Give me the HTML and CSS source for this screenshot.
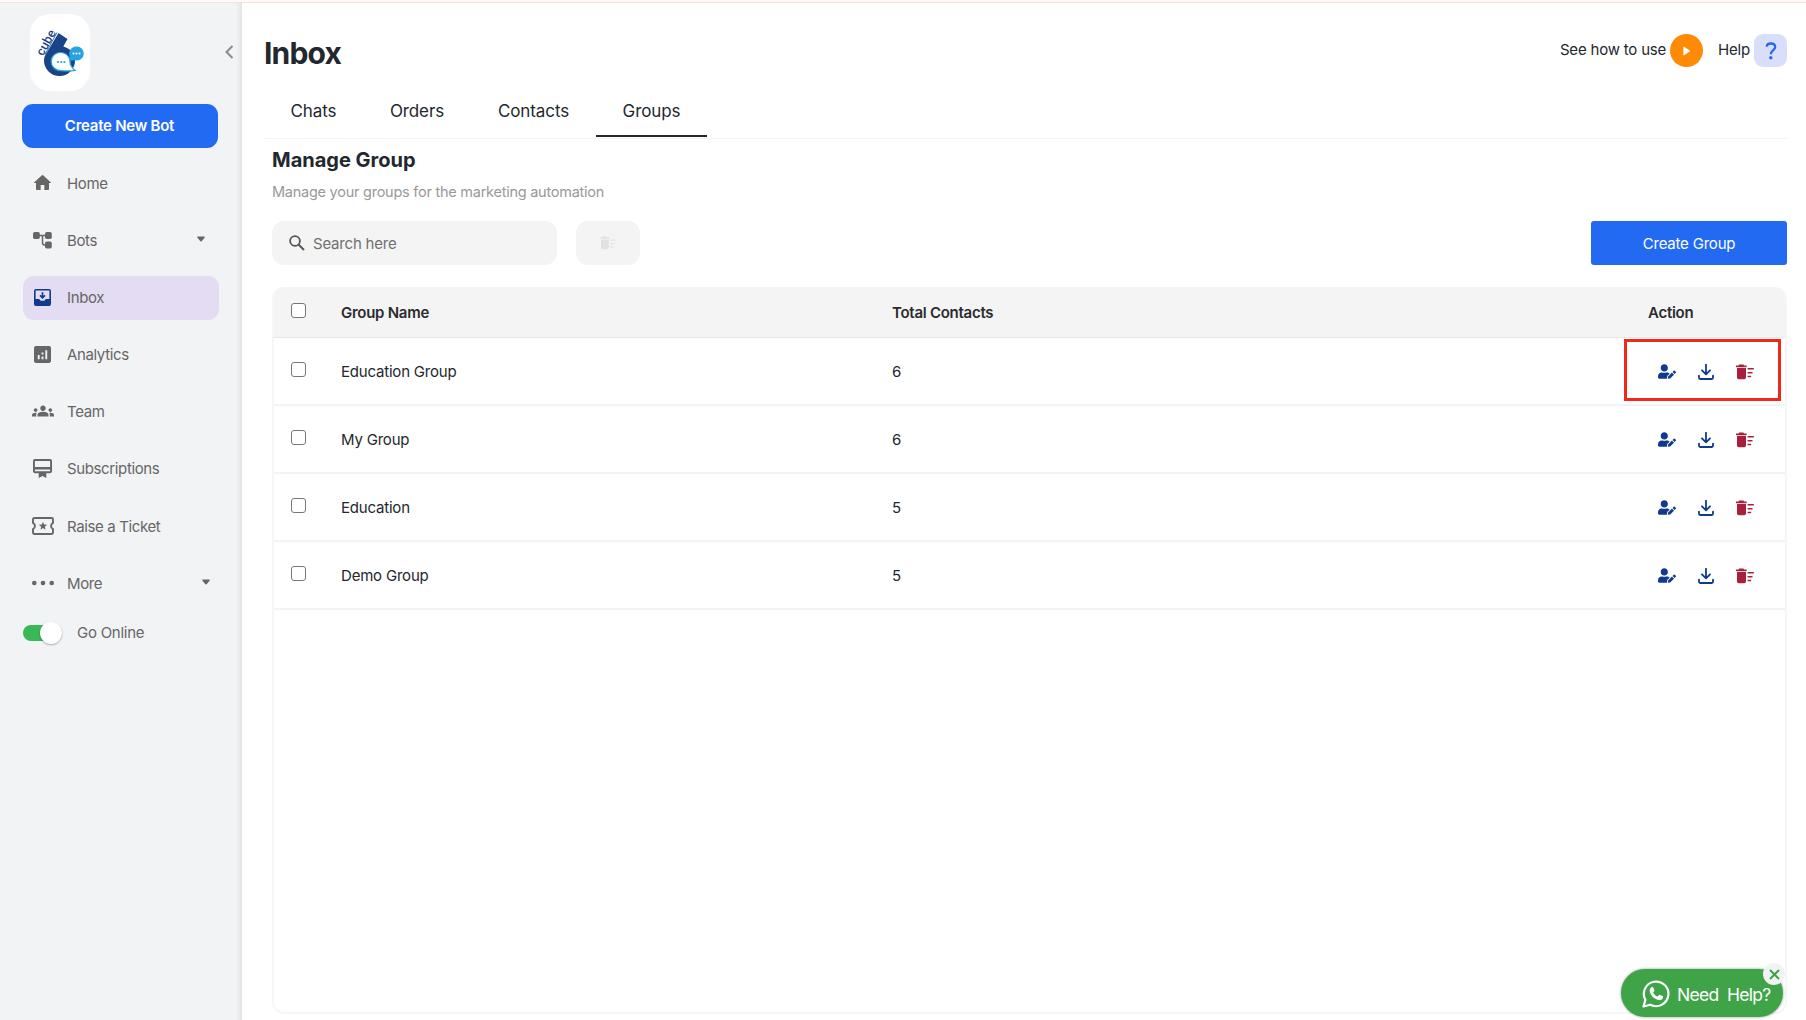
FILE: index.html
```
<!DOCTYPE html>
<html lang="en">

<head>
    <meta charset="utf-8">
    <title>Inbox - Groups</title>
    <link rel="stylesheet" href="styles.css">
</head>

<body>
    <!-- icons used more than once -->
    <svg class="sprite">
        <symbol id="user-edit" viewBox="0 0 640 512">
            <path d="M224 256c70.7 0 128-57.3 128-128S294.7 0 224 0 96 57.3 96 128s57.3 128 128 128zm89.6 32h-16.7c-22.2 10.2-46.9 16-72.9 16s-50.6-5.8-72.9-16h-16.7C60.2 288 0 348.2 0 422.4V464c0 26.5 21.5 48 48 48h274.9c-2.4-6.8-3.4-14-2.6-21.3l6.8-60.9 1.2-11.1 7.9-7.9 77.3-77.3c-24.5-27.7-60-45.5-99.9-45.5zm45.3 145.3l-6.8 61c-1.1 10.2 7.5 18.8 17.6 17.6l60.9-6.8 137.9-137.9-71.7-71.7-137.9 137.8zM633 268.9L595.1 231c-9.3-9.3-24.5-9.3-33.8 0l-37.8 37.8-4.1 4.1 71.8 71.7 41.8-41.8c9.3-9.4 9.3-24.5 0-33.9z" />
        </symbol>
        <symbol id="download" viewBox="0 0 16 16">
            <path d="M8 .8v9M4 6.3l4 4 4-4M1 11.6v2.2q0 1.2 1.2 1.2h11.6q1.2 0 1.2-1.2v-2.2" fill="none" stroke="currentColor" stroke-width="1.8" stroke-linecap="round" stroke-linejoin="round" />
        </symbol>
        <symbol id="trash" viewBox="0 0 18 16">
            <path d="M3.2.4h4.2l.7 1.1h2.6v1.7H0V1.5h2.5zM1 4h9v9.400q0 1.800-1.800 1.800H2.800Q1 15.200 1 13.400zM11.600 4h6.200v1.500h-6.200zM11.600 7.900h4.900v1.500h-4.900zM11.600 11.800h3.500v1.500h-3.500z" />
        </symbol>
        <symbol id="caret" viewBox="0 0 8 6">
            <path d="M.4.4h7.200v1.400L4.600 5.200q-.6.600-1.200 0L.4 1.800z" />
        </symbol>
    </svg>

    <div class="topline"></div>
    <div class="layout">
        <aside class="sidebar">
            <div class="brand">
                <div class="logo">
                    <svg width="60" height="77" viewBox="0 0 60 77">
                        <path d="M28.500 19L37.500 25l-4.200 7.500C41 35 45 40 45 46.500A15.500 15.500 0 0 1 14 46.500C14 43.500 15 41.500 16.500 39z" fill="#1b4487" />
                        <path d="M27 18.500L15 40.500" stroke="#1b4487" stroke-width=".8" />
                        <path d="M46 32.500a7 7 0 1 1-1 13.700q-3.500.8-8.500.3 3-2 3.200-4.300A7 7 0 0 1 46 32.500z" fill="#27a4df" />
                        <path d="M30.500 38.500c5.500 0 9.500 4 9.500 9 0 3.500 2 6.500 5 8.800-4 .8-9 .7-14 .4-5.500 0-9.800-4-9.800-9.200 0-5 4-9 9.300-9z" fill="#fff" stroke="#27a4df" stroke-width="1.200" />
                        <g fill="#27a4df"><circle cx="28" cy="48" r="1.100" /><circle cx="31.200" cy="48" r="1.100" /><circle cx="34.400" cy="48" r="1.100" /></g>
                        <g fill="#fff"><circle cx="43.500" cy="39.500" r="1" /><circle cx="46.500" cy="39.500" r="1" /><circle cx="49.500" cy="39.500" r="1" /></g>
                        <text class="logo-text" transform="translate(13 42.500) rotate(-61)">cube</text>
                    </svg>
                </div>
                <svg class="collapse" width="9" height="14" viewBox="0 0 9 14"><path d="M7.500 1L1.500 7l6 6" fill="none" stroke="#8a8a8a" stroke-width="2" /></svg>
            </div>
            <button class="new-bot">Create New Bot</button>
            <nav class="menu">
                <a class="item">
                    <span class="icon"><svg width="21" height="20" viewBox="0 0 24 24"><path d="M9.800 20.500v-6h4.400v6h4.600q1 0 1-1V12h2.100q.6-.2.200-.7L12.700 2.800q-.7-.6-1.400 0L1.900 11.300q-.4.500.2.700h2.100v7.500q0 1 1 1z" /></svg></span>
                    <span>Home</span>
                </a>
                <a class="item">
                    <span class="icon"><svg width="19" height="17" viewBox="0 0 19 17"><rect x="0" y="0" width="6.800" height="7" rx="1.800" /><rect x="12" y="0" width="6.800" height="7" rx="1.800" /><rect x="12" y="9.600" width="6.800" height="7" rx="1.800" /><path d="M6 3.500h7M9.500 3.500v7q0 2.600 2.500 2.600h1" fill="none" stroke="#666" stroke-width="1.500" /></svg></span>
                    <span>Bots</span>
                    <svg class="caret" width="8" height="6"><use href="#caret" /></svg>
                </a>
                <a class="item active">
                    <span class="icon"><svg width="17" height="17" viewBox="0 0 18 18"><path fill-rule="evenodd" d="M2 0h14q2 0 2 2v14q0 2-2 2H2q-2 0-2-2V2q0-2 2-2zM1.700 1.700V10.500H5.500L7 12.500h4L12.500 10.500H16.300V1.700z" /><path d="M9 3.500v5M6.400 6.700L9 9.300l2.600-2.600" fill="none" stroke="#0f3a8d" stroke-width="1.700" /></svg></span>
                    <span>Inbox</span>
                </a>
                <a class="item">
                    <span class="icon"><svg width="17" height="17" viewBox="3 3 18 18"><path d="M19 3H5c-1.100 0-2 .9-2 2v14c0 1.100.9 2 2 2h14c1.100 0 2-.9 2-2V5c0-1.100-.9-2-2-2zM9 17H7v-4.500h2V17zm4 0h-2v-3h2v3zm0-5h-2v-2h2v2zm4 5h-2V7.500h2V17z" /></svg></span>
                    <span>Analytics</span>
                </a>
                <a class="item">
                    <span class="icon"><svg width="22" height="22" viewBox="0 0 24 24"><path d="M12 12.750c1.630 0 3.070.39 4.240.9 1.080.48 1.760 1.560 1.760 2.730V18H6v-1.610c0-1.180.68-2.260 1.760-2.730 1.170-.52 2.610-.91 4.240-.91zM4 13c1.100 0 2-.9 2-2s-.9-2-2-2-2 .9-2 2 .9 2 2 2zm1.130 1.100c-.37-.06-.74-.1-1.130-.1-.99 0-1.930.21-2.780.58A2.010 2.010 0 0 0 0 16.430V18h4.500v-1.610c0-.83.23-1.610.63-2.290zM20 13c1.100 0 2-.9 2-2s-.9-2-2-2-2 .9-2 2 .9 2 2 2zm4 3.430c0-.81-.48-1.530-1.220-1.850A6.950 6.950 0 0 0 20 14c-.39 0-.76.04-1.130.1.4.68.63 1.460.63 2.290V18H24v-1.570zM12 6c1.660 0 3 1.340 3 3s-1.340 3-3 3-3-1.340-3-3 1.340-3 3-3z" /></svg></span>
                    <span>Team</span>
                </a>
                <a class="item">
                    <span class="icon"><svg width="19" height="19" viewBox="2 2 20 20"><path d="M20 2H4c-1.110 0-2 .89-2 2v11c0 1.110.89 2 2 2h4v5l4-2 4 2v-5h4c1.110 0 2-.89 2-2V4c0-1.110-.89-2-2-2zm0 13H4v-2h16v2zm0-4.500H4V4h16v6.500z" /></svg></span>
                    <span>Subscriptions</span>
                </a>
                <a class="item">
                    <span class="icon"><svg width="22" height="18" viewBox="0 0 22 18"><path d="M2.500 1h17q1.500 0 1.500 1.500v3.300a3.600 3.600 0 0 0 0 6.400v3.300q0 1.500-1.500 1.500h-17Q1 17 1 15.500v-3.300a3.600 3.600 0 0 0 0-6.400V2.500Q1 1 2.500 1z" fill="none" stroke="#666" stroke-width="1.900" /><path d="M11 4.800l1.150 2.750 3 .25-2.300 1.950.7 2.900L11 11.100l-2.550 1.550.7-2.900-2.300-1.950 3-.25z" /></svg></span>
                    <span>Raise a Ticket</span>
                </a>
                <a class="item more">
                    <span class="icon"><svg width="22" height="6" viewBox="0 0 22 6"><circle cx="2.300" cy="3" r="2.300" /><circle cx="11" cy="3" r="2.300" /><circle cx="19.700" cy="3" r="2.300" /></svg></span>
                    <span>More</span>
                    <svg class="caret" width="8" height="6"><use href="#caret" /></svg>
                </a>
            </nav>
            <div class="online">
                <span class="switch"><span class="knob"></span></span>
                <span>Go Online</span>
            </div>
        </aside>

        <main class="main">
            <header class="header">
                <h1>Inbox</h1>
                <div class="links">
                    <span class="how">See how to use</span>
                    <span class="play"><svg width="8" height="10" viewBox="0 0 8 10"><path d="M.8 1v8l6-4z" fill="#fff" stroke="#fff" stroke-width=".8" stroke-linejoin="round" /></svg></span>
                    <span class="help">Help</span>
                    <span class="question"><svg width="12" height="18" viewBox="0 0 12 18"><path d="M1.600 4.700C1.800 2.600 3.500 1.500 5.800 1.500c2.500 0 4.400 1.400 4.400 3.600 0 3.100-4.300 3.200-4.300 7.100" fill="none" stroke="#2668ee" stroke-width="2.300" /><circle cx="5.800" cy="15.800" r="1.700" fill="#2668ee" /></svg></span>
                </div>
            </header>
            <div class="tabs">
                <a class="tab chats">Chats</a>
                <a class="tab orders">Orders</a>
                <a class="tab contacts">Contacts</a>
                <a class="tab groups selected">Groups</a>
            </div>

            <section class="content">
                <h2>Manage Group</h2>
                <p class="sub">Manage your groups for the marketing automation</p>
                <div class="tools">
                    <div class="search">
                        <svg width="16" height="16" viewBox="0 0 16 16"><circle cx="6" cy="6" r="4.900" fill="none" stroke="#555" stroke-width="1.800" /><path d="M9.500 9.500l5.500 5.500" stroke="#555" stroke-width="2" /></svg>
                        <span>Search here</span>
                    </div>
                    <button class="bulk-delete"><svg width="16" height="14"><use href="#trash" /></svg></button>
                    <button class="create-group">Create Group</button>
                </div>

                <div class="table">
                    <div class="row head">
                        <span class="check"></span>
                        <span>Group Name</span>
                        <span class="total">Total Contacts</span>
                        <span class="action">Action</span>
                    </div>
                    <div class="row">
                        <span class="check"></span>
                        <span>Education Group</span>
                        <span>6</span>
                        <span class="actions">
                            <svg class="edit" width="18" height="15"><use href="#user-edit" /></svg>
                            <svg class="save" width="16" height="16"><use href="#download" /></svg>
                            <svg class="delete" width="18" height="16"><use href="#trash" /></svg>
                        </span>
                        <span class="highlight"></span>
                    </div>
                    <div class="row">
                        <span class="check"></span>
                        <span>My Group</span>
                        <span>6</span>
                        <span class="actions">
                            <svg class="edit" width="18" height="15"><use href="#user-edit" /></svg>
                            <svg class="save" width="16" height="16"><use href="#download" /></svg>
                            <svg class="delete" width="18" height="16"><use href="#trash" /></svg>
                        </span>
                    </div>
                    <div class="row">
                        <span class="check"></span>
                        <span>Education</span>
                        <span>5</span>
                        <span class="actions">
                            <svg class="edit" width="18" height="15"><use href="#user-edit" /></svg>
                            <svg class="save" width="16" height="16"><use href="#download" /></svg>
                            <svg class="delete" width="18" height="16"><use href="#trash" /></svg>
                        </span>
                    </div>
                    <div class="row">
                        <span class="check"></span>
                        <span>Demo Group</span>
                        <span>5</span>
                        <span class="actions">
                            <svg class="edit" width="18" height="15"><use href="#user-edit" /></svg>
                            <svg class="save" width="16" height="16"><use href="#download" /></svg>
                            <svg class="delete" width="18" height="16"><use href="#trash" /></svg>
                        </span>
                    </div>
                </div>
            </section>
        </main>
    </div>

    <div class="need-help">
        <svg width="28" height="28" viewBox="0 0 28 28"><path d="M1.500 26.500l1.900-6.600A12.300 12.300 0 1 1 8.300 24.700z" fill="none" stroke="#fff" stroke-width="2.200" stroke-linejoin="round" /><path d="M9.400 7.300c.6-.5 1.500-.4 1.800.3l1.100 2.500c.2.500.1.900-.3 1.300l-.9 1c1 2 2.400 3.300 4.500 4.200l1.200-1.400c.4-.4.800-.5 1.300-.3l2.400 1.200c.6.300.7.800.5 1.400-.6 2-2.300 3-4.300 2.600-4.700-1-8-4.300-8.900-8.500-.3-1.700.2-3.200 1.600-4.300z" fill="#fff" /></svg>
        <span>Need&nbsp; Help?</span>
        <div class="close"><svg width="11" height="11" viewBox="0 0 11 11"><path d="M1 1l9 9M10 1l-9 9" stroke="#3fa447" stroke-width="2" /></svg></div>
    </div>
</body>

</html>
```
FILE: styles.css
```
* {
    box-sizing: border-box;
}

body {
    margin: 0;
    height: 1020px;
    overflow: hidden;
    position: relative;
    background-color: #fff;
    color: #23272e;
    font-family: Inter, "Liberation Sans", sans-serif;
    font-size: 15px;
    letter-spacing: -0.2px;
}

h1, h2, p {
    margin: 0;
}

svg {
    display: block;
    fill: currentColor;
    flex-shrink: 0;
}

button {
    border: none;
    padding: 0;
    font-family: inherit;
    letter-spacing: inherit;
}

.sprite {
    display: none;
}

.topline {
    height: 3px;
    background-color: #fffafa;
    border-bottom: 1px solid #fbe0d9;
}

.layout {
    display: flex;
    height: 1017px;
}

/* sidebar */
.sidebar {
    width: 242px;
    flex-shrink: 0;
    background-color: #f2f3f5;
    background-image: linear-gradient(to left, #e3e4e6, #f2f3f5 6px);
    color: #666;
    letter-spacing: -0.37px;
}

.brand {
    display: flex;
    justify-content: space-between;
    padding: 11px 8px 0 30px;
}

.logo {
    width: 60px;
    height: 77px;
    border-radius: 20px;
    background-color: #fff;
}

.logo-text {
    font-family: Roboto, sans-serif;
    font-size: 12.5px;
    font-weight: 500;
    letter-spacing: 0;
    text-rendering: geometricPrecision;
    fill: #1b4487;
}

.collapse {
    margin-top: 31px;
}

.new-bot {
    display: block;
    width: 196px;
    height: 44px;
    margin: 13px 0 0 21.5px;
    border-radius: 11px;
    background-color: #226af2;
    color: #fff;
    font-size: 15px;
    font-weight: 600;
    letter-spacing: -0.25px;
    padding-bottom: 1px;
}

.menu {
    display: flex;
    flex-direction: column;
    gap: 13.1px;
    padding: 13.5px 23px 0;
}

.item {
    display: flex;
    align-items: center;
    height: 44px;
    border-radius: 11px;
    padding-right: 14px;
}

.icon {
    width: 39px;
    height: 20px;
    margin: -1px 5px 0 0;
    display: flex;
    align-items: center;
    justify-content: center;
}

.active {
    background-color: #e3dcf3;
}

.active .icon {
    color: #0f3a8d;
}

.caret {
    margin: -3px 0 0 auto;
}

.more {
    padding-right: 9px;
}

.online {
    display: flex;
    align-items: center;
    gap: 15px;
    height: 22px;
    margin: 16px 0 0 23px;
    letter-spacing: -0.25px;
}

.switch {
    width: 39px;
    height: 16px;
    margin-top: 2px;
    border-radius: 8px;
    display: flex;
    align-items: center;
    justify-content: flex-end;
    background-color: #38b857;
}

.knob {
    width: 22px;
    height: 22px;
    flex-shrink: 0;
    border-radius: 50%;
    background-color: #fff;
    box-shadow: 0 1px 2px rgba(0, 0, 0, 0.3);
}

/* main part */
.main {
    flex: 1;
    padding: 0 19px 0 22px;
}

.header {
    display: flex;
    justify-content: space-between;
    height: 83px;
    padding-top: 31px;
}

h1 {
    font-size: 30px;
    line-height: 38px;
    letter-spacing: -0.8px;
}

.links {
    display: flex;
    height: 33px;
    line-height: 31px;
}

.play, .question {
    width: 33px;
    height: 33px;
    display: flex;
    align-items: center;
    justify-content: center;
    background-color: #ff8a05;
    border-radius: 50%;
}

.play {
    margin: 0 15px 0 4px;
}

.question {
    margin-left: 4px;
    border-radius: 9px;
    background-color: #d9dffb;
}

.tabs {
    display: flex;
    height: 53px;
    border-bottom: 1px solid #f3f3f3;
    font-size: 17px;
    letter-spacing: -0.1px;
}

.tab {
    height: 51px;
    line-height: 50px;
    text-align: center;
}

.chats {
    width: 99px;
}

.orders {
    width: 108px;
}

.contacts {
    width: 125px;
}

.groups {
    width: 111px;
}

.selected {
    border-bottom: 2px solid #23272e;
}

.content {
    padding-left: 8px;
}

h2 {
    margin-top: 7px;
    font-size: 20px;
    line-height: 28px;
    letter-spacing: 0;
}

.sub {
    margin-top: 8px;
    line-height: 20px;
    font-size: 14.5px;
    letter-spacing: -0.25px;
    color: #999;
}

.tools {
    display: flex;
    margin-top: 19px;
    height: 44px;
}

.search {
    width: 285px;
    border-radius: 12px;
    background-color: #f4f4f4;
    display: flex;
    align-items: center;
    gap: 8px;
    padding-left: 17px;
    color: #707070;
}

.bulk-delete {
    width: 64px;
    margin-left: 19px;
    border-radius: 12px;
    background-color: #f4f4f4;
    color: #e2e2e2;
    display: flex;
    align-items: center;
    justify-content: center;
}

.create-group {
    width: 196px;
    margin-left: auto;
    border-radius: 3px;
    background-color: #226af2;
    color: #fff;
    font-size: 15px;
}

.table {
    height: 727px;
    margin-top: 22px;
    border: 2px solid #f6f6f7;
    border-top: none;
    border-radius: 12px;
    overflow: hidden;
}

.row {
    position: relative;
    display: grid;
    grid-template-columns: 50px 551px 1fr 157px;
    align-items: center;
    height: 68px;
    padding-left: 17px;
    border-bottom: 2px solid #f2f3f4;
}

.head {
    height: 51px;
    background-color: #f4f4f4;
    border-bottom: 1px solid #e6e6e7;
    color: #2b2b2f;
    font-weight: 600;
    letter-spacing: -0.27px;
}

.check {
    width: 15px;
    height: 15px;
    margin-top: -4px;
    border: 1px solid #777;
    border-radius: 3px;
    background-color: #fff;
}

.action {
    padding-left: 20px;
}

.actions {
    display: flex;
    align-items: center;
    margin-top: 1px;
    padding-left: 30px;
}

.edit, .save {
    color: #0f3a8d;
}

.save {
    margin: 0 22px;
}

.delete {
    color: #a8213c;
}

.highlight {
    position: absolute;
    top: 1px;
    right: 4px;
    width: 157px;
    height: 62px;
    border: 3px solid #f0281a;
}

/* whatsapp widget */
.need-help {
    position: absolute;
    left: 1621px;
    top: 969px;
    width: 162px;
    height: 48px;
    border-radius: 24px;
    background-color: #3fa447;
    box-shadow: 0 0 3px rgba(0, 0, 0, 0.4);
    display: flex;
    align-items: center;
    gap: 7px;
    padding-left: 21px;
    padding-top: 2px;
    color: #fff;
    font-size: 17.5px;
    letter-spacing: -0.7px;
    white-space: nowrap;
}

.close {
    position: absolute;
    top: -6px;
    right: -2px;
    width: 22px;
    height: 22px;
    border-radius: 50%;
    background-color: #f0f2f3;
    display: flex;
    align-items: center;
    justify-content: center;
}
```
